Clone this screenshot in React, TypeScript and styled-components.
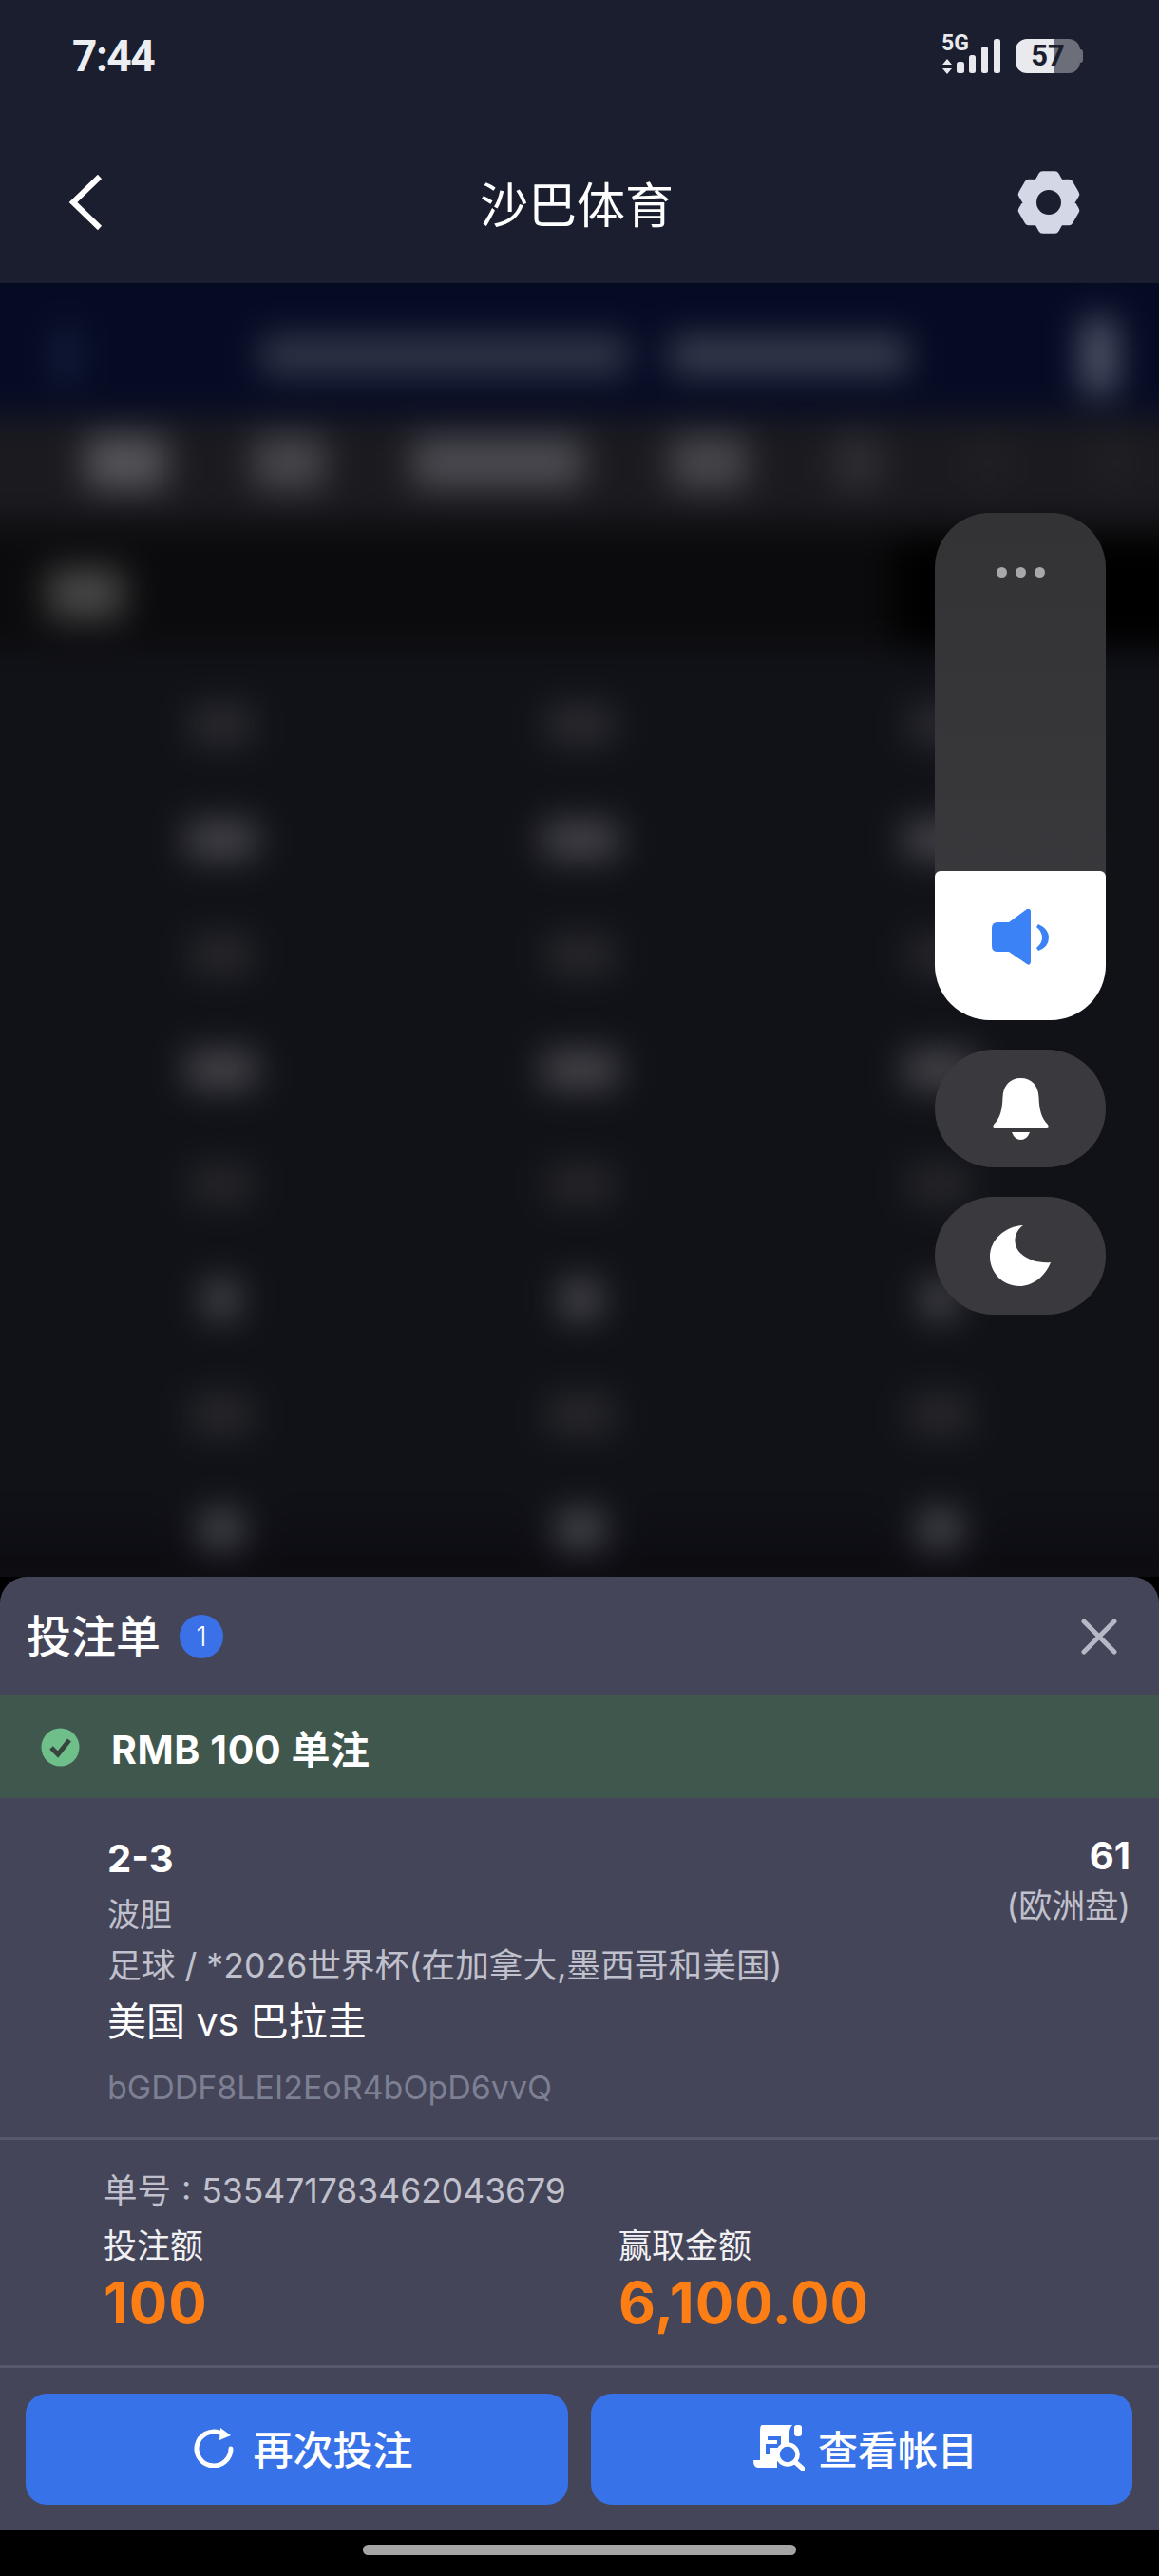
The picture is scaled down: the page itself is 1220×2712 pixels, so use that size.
import { Fragment } from "react";
import styled, { createGlobalStyle } from "styled-components";

const GlobalStyle = createGlobalStyle`
  html, body {
    margin: 0;
    padding: 0;
    background: #000;
  }
  * {
    box-sizing: border-box;
  }
`;

const FONT = `Inter, "Noto Sans CJK SC", sans-serif`;

const Page = styled.div`
  width: 1220px;
  height: 2712px;
  display: flex;
  flex-direction: column;
  overflow: hidden;
  background: #000;
  font-family: ${FONT};
  color: #fff;
`;

/* top header */
const Header = styled.header`
  height: 298px;
  flex: none;
  padding-top: 30px;
  background: #1a1e2f;
`;

const StatusBar = styled.div`
  height: 58px;
  padding: 0 83px 0 76px;
  display: flex;
  align-items: center;
  justify-content: space-between;
`;

const Time = styled.span`
  font-family: Roboto, sans-serif;
  font-size: 46px;
  font-weight: 700;
  color: #eceef2;
  letter-spacing: -1.5px;
`;

const StatusIcons = styled.div`
  display: flex;
  align-items: center;
  gap: 16px;
`;

const Battery = styled.div`
  position: relative;
  width: 68px;
  height: 36px;
  border-radius: 12px;
  background: linear-gradient(90deg, #e9eaee 59%, #6c6e79 59%);
  color: #1a1e2f;
  font-family: Roboto, sans-serif;
  font-size: 31px;
  font-weight: 700;
  line-height: 36px;
  text-align: center;

  &::after {
    content: "";
    position: absolute;
    right: -3px;
    top: 11px;
    width: 3px;
    height: 14px;
    border-radius: 0 3px 3px 0;
    background: #6c6e79;
  }
`;

const Nav = styled.div`
  height: 110px;
  margin-top: 70px;
  padding: 0 82px 0 72px;
  display: grid;
  grid-template-columns: 1fr auto 1fr;
  align-items: center;

  & > svg:last-child {
    justify-self: end;
  }
`;

const NavTitle = styled.h1`
  margin: 0 0 0 4px;
  font-size: 51px;
  font-weight: 400;
  color: #fff;
`;

/* blurred page behind the sheet */
const Backdrop = styled.main`
  position: relative;
  flex: 1;
  overflow: hidden;
  background: #111218;
`;

const BlurLayer = styled.div`
  margin: -60px -60px 0;
  filter: blur(18px);
  display: flex;
  flex-direction: column;
`;

const TopBand = styled.div`
  height: 200px;
  padding: 0 62px 44px 120px;
  display: flex;
  align-items: flex-end;
  gap: 45px;
  background: #060b24;
`;

const TabBand = styled.div`
  height: 114px;
  padding: 0 0 16px 150px;
  display: flex;
  align-items: center;
  gap: 92px;
  background: #1a1a1f;
`;

const SortBand = styled.div`
  height: 130px;
  padding: 16px 0 0 110px;
  display: flex;
  align-items: center;
  justify-content: space-between;
  background: #0b0b0d;
`;

const Blob = styled.div<{ $w: number; $h: number; $c: string; $ml?: number; $mb?: number }>`
  width: ${(p) => p.$w}px;
  height: ${(p) => p.$h}px;
  flex: none;
  margin-left: ${(p) => p.$ml ?? 0}px;
  margin-bottom: ${(p) => p.$mb ?? 0}px;
  background: ${(p) => p.$c};
`;

const OddsGrid = styled.div`
  padding: 20px 0 0 104px;
  display: grid;
  grid-template-columns: repeat(3, 378px);
  grid-auto-rows: 121px;
  align-items: center;
  justify-items: center;
  background: linear-gradient(#111218 90%, #0b0b10);
`;

/* floating controls */
const Controls = styled.div`
  position: absolute;
  top: 242px;
  right: 56px;
  width: 180px;
  display: flex;
  flex-direction: column;
  gap: 31px;
`;

const Slider = styled.div`
  height: 534px;
  border-radius: 58px;
  overflow: hidden;
  display: flex;
  flex-direction: column;
  background: linear-gradient(#333336, #3b3b3f);
`;

const Dots = styled.div`
  flex: 1;
  padding-top: 57px;
  display: flex;
  justify-content: center;
  gap: 9px;
`;

const Dot = styled.span`
  width: 11px;
  height: 11px;
  border-radius: 50%;
  background: #a8a8aa;
`;

const SliderThumb = styled.div`
  height: 157px;
  border-radius: 6px 6px 0 0;
  padding-bottom: 18px;
  display: flex;
  align-items: center;
  justify-content: center;
  background: #fff;
`;

const RoundControl = styled.div`
  height: 124px;
  border-radius: 62px;
  display: flex;
  align-items: center;
  justify-content: center;
  background: #3a3a3e;
`;

/* bet slip */
const Sheet = styled.section`
  flex: none;
  border-radius: 28px 28px 0 0;
  background: #444559;
`;

const SheetHeader = styled.div`
  height: 125px;
  padding: 0 44px 0 28px;
  display: flex;
  align-items: center;
`;

const SheetTitle = styled.h2`
  margin: 0;
  font-size: 47px;
  font-weight: 500;
  line-height: 1;
`;

const CountBadge = styled.span`
  width: 46px;
  height: 46px;
  margin-left: 20px;
  border-radius: 50%;
  display: flex;
  align-items: center;
  justify-content: center;
  background: #3a71e8;
  font-size: 28px;
  font-weight: 300;
`;

const CloseButton = styled.button`
  margin-left: auto;
  padding: 0;
  border: 0;
  display: flex;
  background: none;
`;

const SuccessBar = styled.div`
  height: 108px;
  padding-left: 43px;
  display: flex;
  align-items: center;
  gap: 33px;
  background: #40574d;
`;

const SuccessText = styled.span`
  font-size: 41px;
  font-weight: 700;
  letter-spacing: 0.6px;
`;

const Details = styled.div`
  height: 357px;
  padding: 40px 30px 0 113px;
  display: flex;
  justify-content: space-between;
`;

const DetailColumn = styled.div`
  display: flex;
  flex-direction: column;
`;

const OddsColumn = styled(DetailColumn)`
  align-items: flex-end;
`;

const Selection = styled.div`
  font-size: 40px;
  font-weight: 700;
  line-height: 48px;
`;

const Odds = styled(Selection)`
  margin-top: -3px;
`;

const Muted = styled.div<{ $mt: number; $size?: number }>`
  margin-top: ${(p) => p.$mt}px;
  font-size: ${(p) => p.$size ?? 34}px;
  line-height: 44px;
  color: #c0c1cc;
  white-space: nowrap;
`;

const Teams = styled.div`
  margin-top: 11px;
  font-size: 41px;
  line-height: 52px;
`;

const Hash = styled(Muted)`
  color: #7d7f92;
`;

const BetNumber = styled(Muted)`
  word-spacing: 1px;
`;

const Divider = styled.hr`
  height: 3px;
  margin: 0;
  border: 0;
  background: #57586d;
`;

const Summary = styled.div`
  height: 237px;
  padding: 32px 0 0 109px;
`;

const Stats = styled.div`
  display: grid;
  grid-template-columns: 542px 1fr;
`;

const StatLabel = styled.div`
  margin-top: 13px;
  font-size: 35px;
  line-height: 44px;
  color: #f1f1f4;
`;

const StatValue = styled.div`
  margin-top: 8px;
  font-size: 60px;
  font-weight: 700;
  line-height: 60px;
  letter-spacing: 1px;
  color: #fd7e14;
`;

const Actions = styled.div`
  height: 171px;
  padding: 27px 28px 0 27px;
  display: grid;
  grid-template-columns: 571px 570px;
  gap: 24px;
`;

const ActionButton = styled.button<{ $gap: number; $pl: number }>`
  height: 117px;
  padding: 0 0 4px ${(p) => p.$pl}px;
  border: 0;
  border-radius: 22px;
  display: flex;
  align-items: center;
  justify-content: center;
  gap: ${(p) => p.$gap}px;
  background: #3872e8;
  color: #fff;
  font-family: ${FONT};
  font-size: 42px;
  font-weight: 500;
`;

const HomeBar = styled.footer`
  height: 48px;
  flex: none;
  padding-top: 15px;
  display: flex;
  justify-content: center;
  background: #000;
`;

const HomePill = styled.div`
  width: 456px;
  height: 11px;
  border-radius: 6px;
  background: #a4a4a4;
`;

/* icons */
const NetworkIcon = () => (
  <svg width="62" height="54" viewBox="0 0 62 54">
    <text x="0" y="21" fontFamily="Roboto, sans-serif" fontSize="23" fontWeight="700" fill="#e9eaee">
      5G
    </text>
    <path d="M6 30l5 6H1zM6 46l5-6H1z" fill="#e9eaee" />
    <rect x="16" y="33" width="8" height="12" rx="2.5" fill="#e9eaee" />
    <rect x="29" y="26" width="7" height="19" rx="2.5" fill="#e9eaee" />
    <rect x="42" y="17" width="7" height="28" rx="2.5" fill="#e9eaee" />
    <rect x="55" y="9" width="7" height="36" rx="2.5" fill="#e9eaee" />
  </svg>
);

const BackIcon = () => (
  <svg width="36" height="60" viewBox="0 0 36 60">
    <path d="M33 3L5 30l28 27" fill="none" stroke="#fff" strokeWidth="6" />
  </svg>
);

const gearPoints = Array.from({ length: 6 }, (_, i) => {
  const base = i * 60 - 90;
  return [
    [base - 33, 22],
    [base - 13, 29],
    [base + 13, 29],
    [base + 33, 22],
  ];
})
  .flat()
  .map(([deg, r]) => {
    const rad = (deg * Math.PI) / 180;
    return `${(34 + r * Math.cos(rad)).toFixed(1)},${(35 + r * Math.sin(rad)).toFixed(1)}`;
  })
  .join(" ");

const GearIcon = () => (
  <svg width="68" height="70" viewBox="0 0 68 70">
    <polygon points={gearPoints} fill="#d3d7e6" stroke="#d3d7e6" strokeWidth="9" strokeLinejoin="round" />
    <circle cx="34" cy="35" r="13" fill="#1a1e2f" />
  </svg>
);

const SpeakerIcon = () => (
  <svg width="60" height="61" viewBox="0 0 60 61">
    <path
      d="M6 15H18L37 1Q40 0 41 3V57Q40 61 37 59L18 46H6Q0 46 0 40V21Q0 15 6 15Z"
      fill="#3a82f6"
    />
    <path d="M49 17Q60 22 60 31Q60 41 49 45L47 42Q53 37 53 31Q53 25 47 20Z" fill="#3a82f6" />
  </svg>
);

const BellIcon = () => (
  <svg width="59" height="65" viewBox="0 0 59 65">
    <path
      d="M29.5 0C41 0 48 8 48.5 20C49 33 51 42 58 49Q60 53 57 53H2Q-1 53 1 49C8 42 10 33 10.5 20C11 8 18 0 29.5 0Z"
      fill="#fff"
    />
    <path d="M20 57H39Q36 65 29.5 65Q23 65 20 57Z" fill="#fff" />
  </svg>
);

const MoonIcon = () => (
  <svg width="64" height="64" viewBox="0 0 64 64">
    <path
      d="M35 0C24 8 24 22 33 30C41 37 52 40 64 39C58 54 45 64 31 64C14 64 0 50 0 33C0 15 16 1 35 0Z"
      fill="#fff"
    />
  </svg>
);

const CloseIcon = () => (
  <svg width="38" height="38" viewBox="0 0 38 38">
    <path d="M3 3l32 32M35 3L3 35" stroke="#b6b8c6" strokeWidth="5" strokeLinecap="round" />
  </svg>
);

const CheckIcon = () => (
  <svg width="41" height="41" viewBox="0 0 41 41">
    <circle cx="20.5" cy="20.5" r="20" fill="#6fbf8a" />
    <path d="M11 21l7 7 12-15" fill="none" stroke="#37443e" strokeWidth="5" />
  </svg>
);

const RetryIcon = () => (
  <svg width="42" height="42" viewBox="0 0 42 42">
    <path d="M39 22A18 18 0 1 1 27 5" fill="none" stroke="#fff" strokeWidth="5" strokeLinecap="round" />
    <path d="M28 0L39 8 27 13Z" fill="#fff" />
  </svg>
);

const LedgerIcon = () => (
  <svg width="54" height="48" viewBox="0 0 54 48">
    <path
      d="M9 0H41Q38 3 38 8V17L25 38V45H5Q0 45 0 37H7V7Q7 0 9 0Z"
      fill="#fff"
    />
    <path d="M15 14H27V22H15V31" fill="none" stroke="#3872e8" strokeWidth="4" />
    <rect x="43" y="0" width="8" height="12" rx="3" fill="#fff" />
    <circle cx="36" cy="31" r="10.5" fill="#3872e8" stroke="#fff" strokeWidth="4.5" />
    <path d="M44 39l8 7" stroke="#fff" strokeWidth="5" strokeLinecap="round" />
  </svg>
);

const ROWS = [
  { c: "#2c2c31", w: 64 },
  { c: "#45454b", w: 74 },
  { c: "#29292d", w: 64 },
  { c: "#46464b", w: 74 },
  { c: "#27272b", w: 64 },
  { c: "#4a4a50", w: 36 },
  { c: "#29292d", w: 64 },
  { c: "#484850", w: 44 },
];

const App = () => {
  return (
    <Page>
      <GlobalStyle />
      <Header>
        <StatusBar>
          <Time>7:44</Time>
          <StatusIcons>
            <NetworkIcon />
            <Battery>57</Battery>
          </StatusIcons>
        </StatusBar>
        <Nav>
          <BackIcon />
          <NavTitle>沙巴体育</NavTitle>
          <GearIcon />
        </Nav>
      </Header>

      <Backdrop>
        <BlurLayer>
          <TopBand>
            <Blob $w={20} $h={60} $c="#1a2440" $mb={-10} />
            <Blob $w={385} $h={40} $c="#333a4a" $ml={150} />
            <Blob $w={250} $h={40} $c="#3a4050" />
            <Blob $w={34} $h={78} $c="#585e70" $ml={140} $mb={-20} />
          </TopBand>
          <TabBand>
            <Blob $w={85} $h={56} $c="#55555a" />
            <Blob $w={75} $h={56} $c="#47474c" />
            <Blob $w={180} $h={52} $c="#4c4c52" />
            <Blob $w={80} $h={56} $c="#47474c" />
            <Blob $w={50} $h={56} $c="#2e2e33" />
            <Blob $w={40} $h={56} $c="#202024" />
            <Blob $w={40} $h={56} $c="#202024" />
          </TabBand>
          <SortBand>
            <Blob $w={80} $h={54} $c="#484848" />
            <Blob $w={340} $h={114} $c="#000" />
          </SortBand>
          <OddsGrid>
            {ROWS.map((row, i) => (
              <Fragment key={i}>
                <Blob $w={row.w} $h={40} $c={row.c} />
                <Blob $w={row.w + 6} $h={40} $c={row.c} />
                <Blob $w={row.w} $h={40} $c={row.c} />
              </Fragment>
            ))}
          </OddsGrid>
        </BlurLayer>

        <Controls>
          <Slider>
            <Dots>
              <Dot />
              <Dot />
              <Dot />
            </Dots>
            <SliderThumb>
              <SpeakerIcon />
            </SliderThumb>
          </Slider>
          <RoundControl>
            <BellIcon />
          </RoundControl>
          <RoundControl>
            <MoonIcon />
          </RoundControl>
        </Controls>
      </Backdrop>

      <Sheet>
        <SheetHeader>
          <SheetTitle>投注单</SheetTitle>
          <CountBadge>1</CountBadge>
          <CloseButton>
            <CloseIcon />
          </CloseButton>
        </SheetHeader>
        <SuccessBar>
          <CheckIcon />
          <SuccessText>RMB 100 单注</SuccessText>
        </SuccessBar>
        <Details>
          <DetailColumn>
            <Selection>2-3</Selection>
            <Muted $mt={13}>波胆</Muted>
            <Muted $mt={9} $size={35.7}>
              足球 / *2026世界杯(在加拿大,墨西哥和美国)
            </Muted>
            <Teams>美国 vs 巴拉圭</Teams>
            <Hash $mt={22}>bGDDF8LEI2EoR4bOpD6vvQ</Hash>
          </DetailColumn>
          <OddsColumn>
            <Odds>61</Odds>
            <Muted $mt={6} $size={35}>
              (欧洲盘)
            </Muted>
          </OddsColumn>
        </Details>
        <Divider />
        <Summary>
          <BetNumber $mt={0} $size={35.5}>
            单号 : 535471783462043679
          </BetNumber>
          <Stats>
            <div>
              <StatLabel>投注额</StatLabel>
              <StatValue>100</StatValue>
            </div>
            <div>
              <StatLabel>赢取金额</StatLabel>
              <StatValue>6,100.00</StatValue>
            </div>
          </Stats>
        </Summary>
        <Divider />
        <Actions>
          <ActionButton $gap={20} $pl={14}>
            <RetryIcon />
            再次投注
          </ActionButton>
          <ActionButton $gap={14} $pl={8}>
            <LedgerIcon />
            查看帐目
          </ActionButton>
        </Actions>
      </Sheet>

      <HomeBar>
        <HomePill />
      </HomeBar>
    </Page>
  );
};

export default App;
